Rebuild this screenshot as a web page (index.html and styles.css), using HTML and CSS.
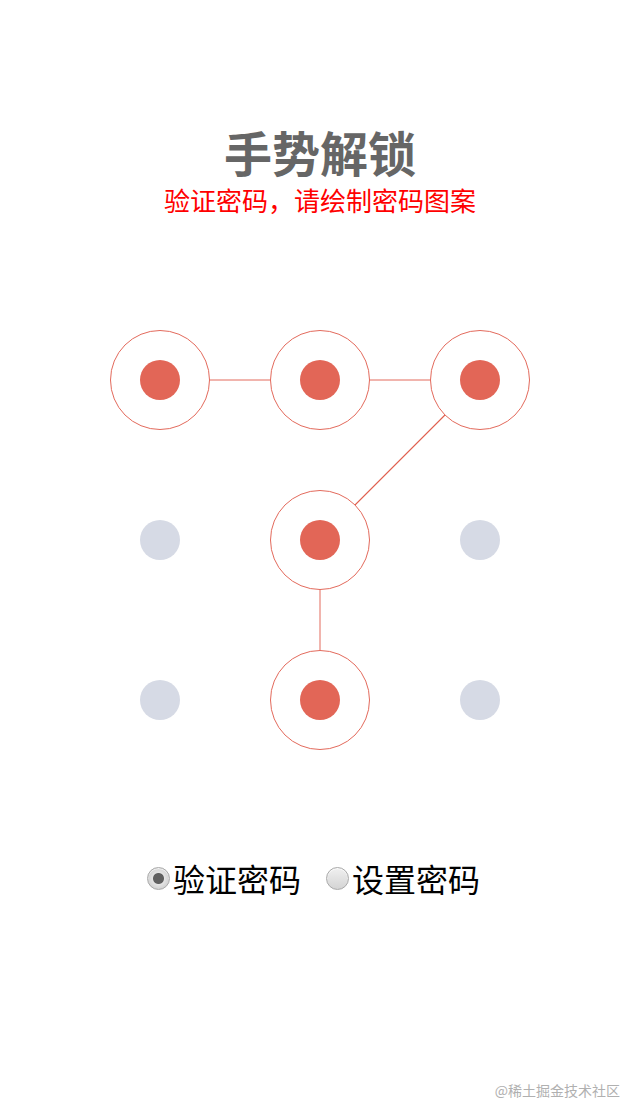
FILE: index.html
```html
<!DOCTYPE html>
<html lang="zh">
<head>
<meta charset="utf-8">
<title>手势解锁</title>
<link rel="stylesheet" href="styles.css">
</head>
<body>
<div class="page">
  <header class="head">
    <h1 class="title">手势解锁</h1>
    <p class="subtitle">验证密码，请绘制密码图案</p>
  </header>
  <svg class="pad" width="480" height="480" viewBox="0 0 480 480">
    <g class="path">
      <line x1="80" y1="80" x2="400" y2="80"/>
      <line class="diag" x1="400" y1="80" x2="240" y2="240"/>
      <line x1="240" y1="240" x2="240" y2="400"/>
    </g>
    <g class="ring">
      <circle cx="80" cy="80" r="49.5"/>
      <circle cx="240" cy="80" r="49.5"/>
      <circle cx="400" cy="80" r="49.5"/>
      <circle cx="240" cy="240" r="49.5"/>
      <circle cx="240" cy="400" r="49.5"/>
    </g>
    <g class="dot on">
      <circle cx="80" cy="80" r="20"/>
      <circle cx="240" cy="80" r="20"/>
      <circle cx="400" cy="80" r="20"/>
      <circle cx="240" cy="240" r="20"/>
      <circle cx="240" cy="400" r="20"/>
    </g>
    <g class="dot off">
      <circle cx="80" cy="240" r="20"/>
      <circle cx="400" cy="240" r="20"/>
      <circle cx="80" cy="400" r="20"/>
      <circle cx="400" cy="400" r="20"/>
    </g>
  </svg>
  <form class="modes">
    <label class="mode"><input type="radio" name="mode" class="radio" checked><span>验证密码</span></label>
    <label class="mode"><input type="radio" name="mode" class="radio"><span>设置密码</span></label>
  </form>
  <div class="mark">@稀土掘金技术社区</div>
</div>
</body>
</html>
```
FILE: styles.css
```css
html, body {
  margin: 0;
  padding: 0;
  background: #fff;
}
.page {
  position: relative;
  width: 640px;
  height: 1120px;
  font-family: "Noto Sans CJK SC", "Noto Sans", sans-serif;
  display: flex;
  flex-direction: column;
  align-items: center;
}
.head {
  margin-top: 122px;
  text-align: center;
}
.title {
  margin: 0;
  font-size: 48px;
  line-height: 58px;
  font-weight: 700;
  color: #666;
}
.subtitle {
  margin: 4px 0 0;
  font-size: 26px;
  line-height: 32px;
  color: #f00;
}
.pad {
  display: block;
  margin-top: 84px;
}
.path line {
  stroke: #e36a5c;
  stroke-width: 1;
  shape-rendering: geometricPrecision;
}
.path .diag {
  stroke: #e0604f;
  stroke-width: 1.2;
}
.ring circle {
  fill: #fff;
  stroke: #e36a5c;
  stroke-width: 1;
}
.dot.on circle { fill: #e26657; }
.dot.off circle { fill: #d6dae5; }
.modes {
  margin: 78px 0 0 -13px;
  display: flex;
  align-items: center;
}
.mode {
  display: flex;
  align-items: center;
  font-size: 32px;
  line-height: 40px;
  color: #000;
}
.mode + .mode { margin-left: 25px; }
.radio {
  appearance: none;
  -webkit-appearance: none;
  width: 23px;
  height: 23px;
  margin: 0 3px 0 0;
  border-radius: 50%;
  border: 1px solid #a9a9a9;
  background: linear-gradient(#f0f0f0, #d4d4d4);
  box-shadow: inset 0 1px 1px rgba(255,255,255,0.8);
  box-sizing: border-box;
}
.radio:checked {
  background: radial-gradient(circle, #606060 0, #606060 5px, #e4e4e4 6px, #d0d0d0 11px);
}
.mark {
  position: absolute;
  right: 20px;
  bottom: 20px;
  font-size: 14px;
  line-height: 20px;
  color: #b0b0b0;
}
```
